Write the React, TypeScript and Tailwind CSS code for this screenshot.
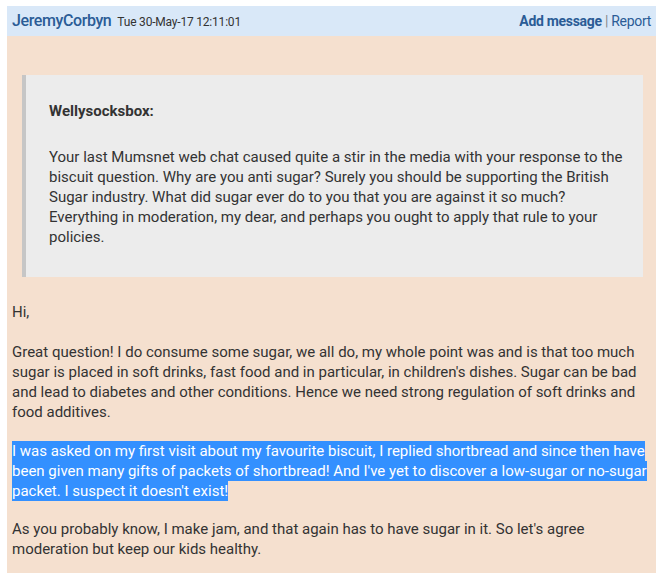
export default function App() {
  return (
    <div className="bg-white pt-[6px] px-[7px] font-['Roboto',sans-serif] text-[15px] leading-[20px] text-[#333]">
      <div className="flex items-center justify-between bg-[#d9e8f8] h-[30px] px-[5px]">
        <div className="flex items-baseline gap-[6px]">
          <span className="text-[16px] font-medium tracking-[-0.4px] text-[#2b5c96]">JeremyCorbyn</span>
          <span className="text-[12px] tracking-[-0.2px] text-[#333]">Tue 30-May-17 12:11:01</span>
        </div>
        <div className="text-[14px] text-[#2b5c96] tracking-[-0.3px]">
          <span className="font-bold">Add message</span>
          <span className="text-[#888]"> | </span>
          <span>Report</span>
        </div>
      </div>
      <div className="bg-[#f5e0cf] px-[5px] pt-[39px] pb-[14px]">
        <div className="bg-[#ececec] border-l-[4px] border-[#c6c6c6] ml-[10px] mr-[8px] pl-[23px] pr-[16px] pt-[26px] pb-[30px]">
          <p className="font-bold">Wellysocksbox:</p>
          <p className="mt-[26px]">
            Your last Mumsnet web chat caused quite a stir in the media with your response to the biscuit question. Why are you
            anti sugar? Surely you should be supporting the British Sugar industry. What did sugar ever do to you that you are
            against it so much? Everything in moderation, my dear, and perhaps you ought to apply that rule to your policies.
          </p>
        </div>
        <div className="mt-[25px]">
          <p>Hi,</p>
          <p className="mt-[20px]">
            Great question! I do consume some sugar, we all do, my whole point was and is that too much sugar is placed in soft
            drinks, fast food and in particular, in children's dishes. Sugar can be bad and lead to diabetes and other
            conditions. Hence we need strong regulation of soft drinks and food additives.
          </p>
          <p className="mt-[19px]">
            <span className="bg-[#3390ff] text-white py-[1px]">
              I was asked on my first visit about my favourite biscuit, I replied shortbread and since then have been given many
              gifts of packets of shortbread! And I've yet to discover a low-sugar or no-sugar packet. I suspect it doesn't
              exist!
            </span>
          </p>
          <p className="mt-[18px]">
            As you probably know, I make jam, and that again has to have sugar in it. So let's agree moderation but keep our
            kids healthy.
          </p>
        </div>
      </div>
    </div>
  );
}
